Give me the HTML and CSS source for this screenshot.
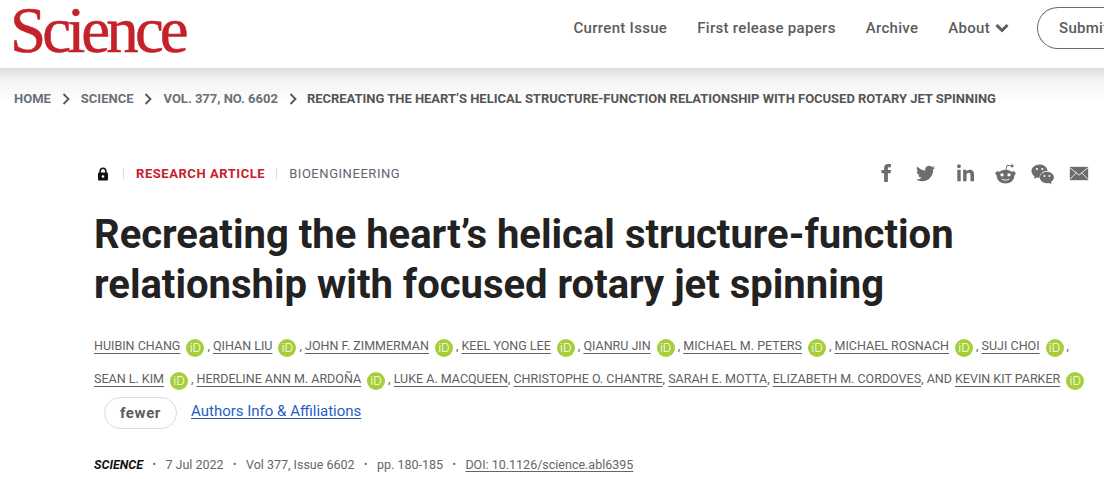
FILE: index.html
```html
<!DOCTYPE html>
<html lang="en">
<head>
<meta charset="utf-8">
<title>Science</title>
<link rel="stylesheet" href="styles.css">
</head>
<body>
<svg class="defs" width="0" height="0" aria-hidden="true">
  <symbol id="chev" viewBox="0 0 8 12"><path d="M1.5 1l5 5-5 5" fill="none" stroke="currentColor" stroke-width="1.8"/></symbol>
</svg>
<header class="site-header">
  <a class="logo">Science</a>
  <nav class="main-nav">
    <a>Current Issue</a>
    <a>First release papers</a>
    <a>Archive</a>
    <a class="about">About
      <svg class="caret" viewBox="0 0 14 10"><path d="M1.5 2l5.5 5.5L12.500 2" fill="none" stroke="currentColor" stroke-width="3"/></svg>
    </a>
    <a class="submit">Submit</a>
  </nav>
</header>
<div class="crumb-band">
  <ol class="crumbs">
    <li>HOME</li>
    <li class="sep"><svg viewBox="0 0 8 12"><use href="#chev"/></svg></li>
    <li>SCIENCE</li>
    <li class="sep"><svg viewBox="0 0 8 12"><use href="#chev"/></svg></li>
    <li>VOL. 377, NO. 6602</li>
    <li class="sep"><svg viewBox="0 0 8 12"><use href="#chev"/></svg></li>
    <li class="current">RECREATING THE HEART’S HELICAL STRUCTURE-FUNCTION RELATIONSHIP WITH FOCUSED ROTARY JET SPINNING</li>
  </ol>
</div>
<main class="article">
  <div class="meta-row">
    <div class="labels">
      <svg class="lock" viewBox="0 0 12 14"><path d="M3.200 6V4a2.800 2.800 0 015.600 0v2" fill="none" stroke="#111" stroke-width="1.600"/><rect x="1" y="5.500" width="10" height="8" rx="1" fill="#111"/><circle cx="6" cy="9.500" r="1.300" fill="#fff"/></svg>
      <span class="bar"></span>
      <span class="type">RESEARCH ARTICLE</span>
      <span class="bar"></span>
      <span class="topic">BIOENGINEERING</span>
    </div>
    <div class="share">
      <svg class="fb" viewBox="0 0 24 24"><path d="M14.500 8V5.700c0-1 .5-1.400 1.500-1.400h2.500V0h-3.700C11.200 0 9.500 2.200 9.500 5.300V8H6v4.300h3.500V24h5V12.300h3.600l.6-4.300z"/></svg>
      <svg class="tw" viewBox="0 0 24 24"><path d="M23.953 4.570a10 10 0 01-2.825.775 4.958 4.958 0 002.163-2.723c-.951.555-2.005.959-3.127 1.184a4.920 4.920 0 00-8.384 4.482C7.690 8.095 4.067 6.130 1.640 3.162a4.822 4.822 0 00-.666 2.475c0 1.710.870 3.213 2.188 4.096a4.904 4.904 0 01-2.228-.616v.060a4.923 4.923 0 003.946 4.827 4.996 4.996 0 01-2.212.085 4.936 4.936 0 004.604 3.417 9.867 9.867 0 01-6.102 2.105c-.390 0-.779-.023-1.170-.067a13.995 13.995 0 007.557 2.209c9.053 0 13.998-7.496 13.998-13.985 0-.210 0-.420-.015-.630A9.935 9.935 0 0024 4.590z"/></svg>
      <svg class="li" viewBox="0 0 24 24"><path d="M5.200 3a2.600 2.600 0 11-5.200 0 2.600 2.600 0 015.200 0zM.4 7.800h4.500V23H.4zM8.200 7.800h4.400v2.100h.1c.6-1.200 2.100-2.400 4.400-2.400 4.700 0 5.600 3.100 5.600 7.100V23h-4.700v-7.400c0-1.800 0-4-2.500-4s-2.800 1.900-2.800 3.900V23H8.200z"/></svg>
      <svg class="re" viewBox="0 0 24 24"><path d="M12.600 8l1.200-5.500 4 .9" fill="none" stroke="#6c6c6c" stroke-width="1.100"/><circle cx="19.600" cy="3.400" r="1.700"/><circle cx="3" cy="12" r="2.500"/><circle cx="21" cy="12" r="2.500"/><ellipse cx="12" cy="15.500" rx="10" ry="7.800"/><circle cx="8" cy="13.500" r="1.900" fill="#fff"/><circle cx="16" cy="13.500" r="1.900" fill="#fff"/><path d="M7.800 18.400c2.500 1.500 5.900 1.500 8.400 0" fill="none" stroke="#fff" stroke-width="1.100"/></svg>
      <svg class="wc" viewBox="0 0 24 24"><path d="M9 2.500C4.300 2.500.5 5.600.5 9.500c0 2.200 1.300 4.200 3.200 5.500L3 17.600l3-1.500c.9.300 1.900.4 3 .5-.3-3.900 3.500-7.600 8.400-7.400C16.800 5.300 13.300 2.500 9 2.500z"/><circle cx="6.200" cy="7.400" r="1.100" fill="#fff"/><circle cx="11.800" cy="7.400" r="1.100" fill="#fff"/><path d="M16.500 10.300c-4 0-7.200 2.600-7.200 5.900s3.200 5.900 7.200 5.900c.8 0 1.600-.1 2.400-.3l2.600 1.400-.6-2.300c1.800-1.100 3-2.800 3-4.700 0-3.300-3.300-5.900-7.400-5.900z"/><circle cx="14" cy="14.600" r="1" fill="#fff"/><circle cx="19.200" cy="14.600" r="1" fill="#fff"/></svg>
      <svg class="ml" viewBox="0 0 24 20"><rect x="1" y="2" width="22" height="16" fill="#6c6c6c"/><path d="M1 3l11 9 11-9M1 17l8-8M23 17l-8-8" fill="none" stroke="#fff" stroke-width="1"/></svg>
    </div>
  </div>
  <h1 class="title">Recreating the heart’s helical structure-function relationship with focused rotary jet spinning</h1>
  <div class="authors">
    <a class="author">HUIBIN CHANG</a><span class="orcid">iD</span><span class="comma">,</span>
    <a class="author">QIHAN LIU</a><span class="orcid">iD</span><span class="comma">,</span>
    <a class="author">JOHN F. ZIMMERMAN</a><span class="orcid">iD</span><span class="comma">,</span>
    <a class="author">KEEL YONG LEE</a><span class="orcid">iD</span><span class="comma">,</span>
    <a class="author">QIANRU JIN</a><span class="orcid">iD</span><span class="comma">,</span>
    <a class="author">MICHAEL M. PETERS</a><span class="orcid">iD</span><span class="comma">,</span>
    <a class="author">MICHAEL ROSNACH</a><span class="orcid">iD</span><span class="comma">,</span>
    <a class="author">SUJI CHOI</a><span class="orcid">iD</span><span class="comma">,</span>
    <a class="author">SEAN L. KIM</a><span class="orcid">iD</span><span class="comma">,</span>
    <a class="author">HERDELINE ANN M. ARDOÑA</a><span class="orcid">iD</span><span class="comma">,</span>
    <a class="author">LUKE A. MACQUEEN</a>,
    <a class="author">CHRISTOPHE O. CHANTRE</a>,
    <a class="author">SARAH E. MOTTA</a>,
    <a class="author">ELIZABETH M. CORDOVES</a>, AND
    <a class="author">KEVIN KIT PARKER</a><span class="orcid">iD</span>
  </div>
  <div class="author-actions">
    <button class="fewer">fewer</button>
    <a class="affil">Authors Info &amp; Affiliations</a>
  </div>
  <div class="pub">
    <em>SCIENCE</em><i class="dot">•</i><span>7 Jul 2022</span><i class="dot">•</i><span>Vol 377, Issue 6602</span><i class="dot">•</i><span>pp. 180-185</span><i class="dot">•</i><a class="doi">DOI: 10.1126/science.abl6395</a>
  </div>
</main>
</body>
</html>
```
FILE: styles.css
```css
* { box-sizing: border-box; }
html, body { margin: 0; padding: 0; overflow: hidden; height: 479px; background: #fff; }
body { font-family: Roboto, "Liberation Sans", sans-serif; color: #555; }
.defs { position: absolute; }

.site-header { height: 68px; display: flex; align-items: flex-start; justify-content: space-between; padding-left: 10px; background: #fff; white-space: nowrap; overflow: hidden; }
.logo { font-family: "Liberation Serif", serif; font-size: 65px; line-height: 60px; letter-spacing: -3.900px; color: #c4212a; -webkit-text-stroke: .5px #c4212a; }
.main-nav { display: flex; align-items: center; flex: none; height: 56px; font-size: 15px; font-weight: 500; letter-spacing: .3px; color: #5c5c5c; margin-right: -20px; gap: 30px; }
.about { display: flex; align-items: center; gap: 5px; }
.caret { width: 14px; height: 10px; }
.submit { display: block; width: 87px; height: 42px; line-height: 40px; padding-left: 21px; border: 1px solid #6b6b6b; border-radius: 21px 0 0 21px; border-right: 0; margin-left: -2px; }

.crumb-band { height: 62px; background: linear-gradient(#dcdcdc 0, #f3f3f3 12px, #fff 34px); padding: 23px 0 0 14px; }
.crumbs { display: flex; align-items: center; gap: 11px; margin: 0; padding: 0; list-style: none; font-size: 13px; font-weight: 700; line-height: 16px; color: #6a7078; white-space: nowrap; }
.crumbs .current { color: #555; letter-spacing: -.02px; margin-left: -1px; }
.sep { display: flex; color: #555; }
.sep svg { width: 8px; height: 12px; }

.article { padding: 0 15px 0 94px; }
.meta-row { display: flex; align-items: center; justify-content: space-between; height: 32px; margin-top: 27px; }
.labels { display: flex; align-items: center; font-size: 13px; letter-spacing: .55px; }
.lock { width: 12px; height: 14px; margin: 1px 14px 0 3px; }
.bar { width: 1px; height: 11px; background: #ddd; }
.type { color: #c8202a; font-weight: 700; margin: 0 11px 0 12px; }
.topic { color: #5d6470; font-weight: 400; margin-left: 12px; }
.share { display: flex; align-items: center; fill: #6c6c6c; }
.share svg { display: block; }
.fb { width: 18px; height: 18px; }
.tw { width: 19px; height: 19px; margin-left: 21px; }
.li { width: 18px; height: 18px; margin-left: 22px; }
.re { width: 21px; height: 21px; margin-left: 20px; }
.wc { width: 23px; height: 23px; margin-left: 15px; }
.ml { width: 20px; height: 17px; margin-left: 15px; }

.title { margin: 21px 0 0; font-size: 40px; line-height: 50px; font-weight: 700; color: #222; width: 900px; }

.authors { margin-top: 19px; font-size: 12.500px; line-height: 33px; color: #616161; }
.author { text-decoration: underline; text-underline-offset: 3px; }
.orcid { display: inline-block; width: 18px; height: 18px; line-height: 18px; margin-left: 6px; border-radius: 50%; background: #a6ce39; color: #fff; font-size: 13px; font-weight: 300; text-align: center; vertical-align: -2px; }
.comma { margin-left: 3px; }

.author-actions { display: flex; align-items: center; gap: 14px; margin: 2px 0 0 10px; }
.fewer { width: 73px; height: 32px; padding: 0; background: #fff; border: 1px solid #ddd; border-radius: 16px; font: 700 15px Roboto, sans-serif; letter-spacing: .6px; color: #5c5c5c; }
.affil { font-size: 15px; color: #1f5fc4; text-decoration: underline; text-underline-offset: 2px; margin-top: -4px; }

.pub { display: flex; align-items: center; margin-top: 28px; font-size: 12.500px; line-height: 16px; color: #666; }
.pub em { color: #111; font-weight: 700; }
.dot { font-style: normal; font-size: 10px; margin: 0 9.500px; }
.doi { text-decoration: underline; text-underline-offset: 2px; }
```
